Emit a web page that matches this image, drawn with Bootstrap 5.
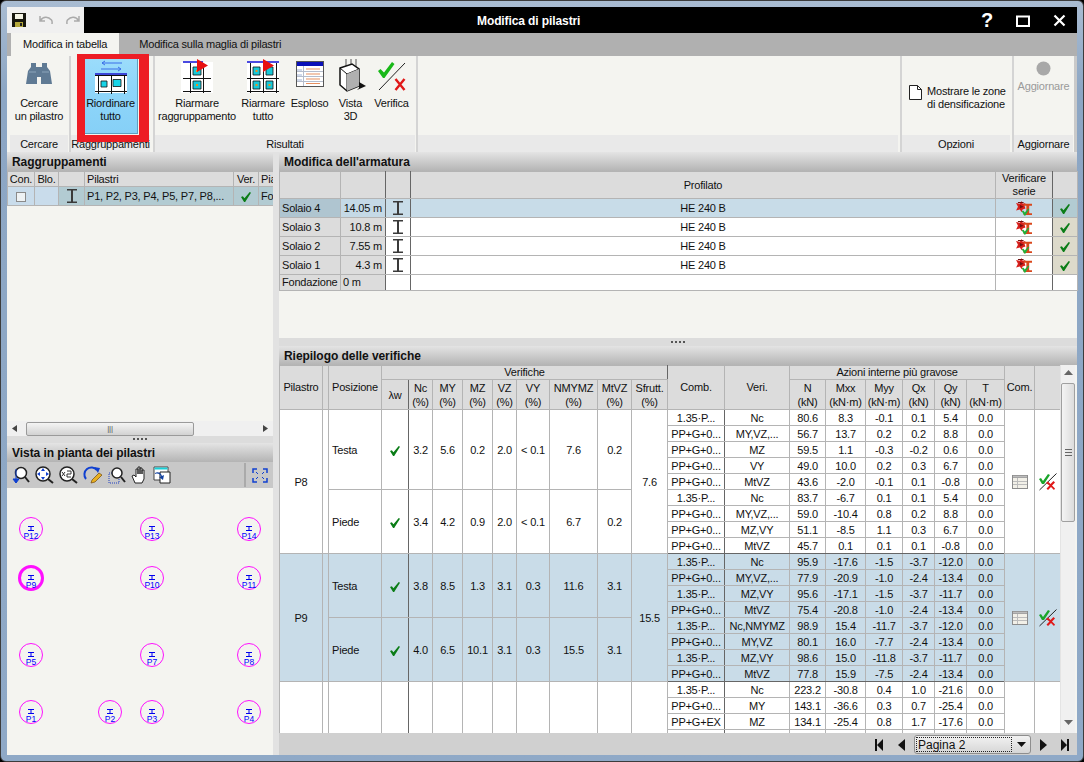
<!DOCTYPE html>
<html lang="it">
<head>
<meta charset="utf-8">
<title>Modifica di pilastri</title>
<link href="https://cdn.jsdelivr.net/npm/bootstrap@5.3.0/dist/css/bootstrap.min.css" rel="stylesheet">
<style>
html,body{margin:0;height:762px;width:1084px;overflow:hidden;background:#000}
body{font:11px/13px "Liberation Sans",Arial,sans-serif;letter-spacing:-.2px;color:#111}
.win{width:1084px;height:762px;padding:6px 6px 5px 6px;border:1px solid #3c3c3c;border-radius:6px;background:linear-gradient(#a9bcd2,#8ca6c4 12%,#8fa9c7)}
.clientw{width:1070px;height:748px}
.tbar{height:26px;background:#000;color:#fff}
.qat{width:77px;background:#f0f0f0}
.qg1{margin-left:12px}
.qg2{margin-left:13px}
.ttl{font-weight:700;font-size:12px;letter-spacing:-.1px;padding-left:393px;line-height:28px;white-space:nowrap}
.wctl{width:36px}
.tabsrow{height:23px;background:#b0b0b0;border:0;padding-left:4px}
.tabsrow .nav-link{border:0;border-radius:0;color:#111;background:transparent;padding:5px 12px 0;height:23px;font-size:11px;margin:0}
.tabsrow .nav-link.active{background:#f4f4f0;color:#111}
.tabsrow .nav-item+.nav-item{margin-left:8px}
.ribbon{height:96px;background:#f4f4f0;padding-right:4px;border-right:3px solid #c9c9c9}
.rgrp{display:flex;flex-direction:column;flex:none;border-left:2px solid #d4d4d4}
.rgrp1{margin-left:3px;width:58px;border-left:0}
.rgrp2{margin-left:1px;width:81px}
.rgrp3{margin-left:3px;width:262px}
.rgrp4{margin-left:1px;width:482px}
.rgrp5{margin-left:2px;width:110px}
.rgrp6{margin-left:2px;width:61px}
.rbody{height:79px;display:flex;justify-content:center}
.rlabel{height:17px;line-height:18px;text-align:center;background:#e9e9e9;white-space:nowrap;font-size:11px}
.rbtn{display:flex;flex-direction:column;align-items:center;text-align:center;flex:none;padding-top:3px}
.rbtn svg{flex:none;margin-bottom:3px}
.rbtn.hot{width:54px;height:76px;margin-top:2px;background:linear-gradient(#9bdcfb,#8fd6fa 38%,#86d0f7);border:1px solid #5b9fc0;padding-top:1px}
.rbtn.agg{padding-top:5px}
.rbtn.agg svg{margin-bottom:4px}
.rb80{width:84px}.rb48{width:48px}.rb45{width:45px}.rb37{width:37px}
.optbody{padding:4px 0 0 7px;align-items:center;justify-content:flex-start}
.optic{flex:none;margin:-10px 5px 0 0}
.redmark{position:absolute;left:76px;top:53px;width:72px;height:88px;border-style:solid;border-color:#ed1c24;border-width:5px 10px 7px 8px}
.paneL{width:266px;flex:none;background:#f4f4f0}
.vsplit{width:6px;flex:none;background:#e2e2e2}
.paneR{width:798px;flex:none;background:#f4f4f0}
.phead{height:19px;flex:none;line-height:20px;padding-left:5px;font-weight:700;font-size:12px;letter-spacing:-.05px;background:linear-gradient(#e4e4e4,#b4b4b4);color:#111;white-space:nowrap;overflow:hidden}
.hsplit{display:flex;flex:none;justify-content:center;align-items:center;background:#dcdcdc}
.dots{height:7px}.dots8{height:8px}
.vt{table-layout:fixed;margin:0;border-collapse:collapse;--bs-table-bg:transparent;--bs-table-color:#111;border-color:#b4b4b4;font-size:11px;flex:none}
.vt>:not(caption)>*>*{padding:0;border:1px solid #b4b4b4;text-align:center;vertical-align:middle;line-height:13px;background:transparent;box-shadow:none;white-space:nowrap;overflow:hidden;color:#111}
.vt>thead>tr>*{background:#dcdcdc;font-weight:400}
.tbg{width:266px}
.tbg col:nth-child(1){width:27px}.tbg col:nth-child(2){width:24px}.tbg col:nth-child(3){width:26px}.tbg col:nth-child(4){width:149px}.tbg col:nth-child(5){width:25px}.tbg col:nth-child(6){width:15px}
.tbg thead th{height:15px}
.tbg tbody td{height:19px;background:#b2cbd2}
.tbg tbody td.sel0{background:#c9dceb}
.tbg tbody td.lf,.tbg thead th.lf{text-align:left;padding-left:2px}
.ckbox{display:inline-block;width:10px;height:10px;border:1px solid #8a8a8a;background:#eef2f4;vertical-align:middle}
.tar{width:798px}
.tar col:nth-child(1){width:61px}.tar col:nth-child(2){width:45px}.tar col:nth-child(3){width:25px}.tar col:nth-child(4){width:585px}.tar col:nth-child(5){width:57px}.tar col:nth-child(6){width:25px}
.tar thead th{height:27px}
.tar tbody td{height:19px;background:#fff}
.tar tbody tr.lastr td{height:16px}
.tar tbody td.hc{background:#dcdcdc;text-align:left;padding-left:2px}
.tar tbody td.hv{background:#dcdcdc;text-align:right;padding-right:3px}
.tar tbody td.ck{background:#dddacb}
.tar tbody tr.on td{background:#c8dce8}
.tar tbody tr.on td.hc{background:#afc5d0}
.tar tbody tr.on td.hv{background:#c5d9e6}
.tar tbody tr.on td.ck{background:#b2cbd2}
.vt>*>*>.ld{border-left-color:#666;border-right-color:#666}
.vt>tbody>tr.tdk>*{border-bottom-color:#666}
.tsum{width:781px}
.tsum col:nth-child(1){width:43px}.tsum col:nth-child(2){width:6px}.tsum col:nth-child(3){width:53px}.tsum col:nth-child(4){width:27px}.tsum col:nth-child(5){width:24px}.tsum col:nth-child(6){width:30px}.tsum col:nth-child(7){width:30px}.tsum col:nth-child(8){width:24px}.tsum col:nth-child(9){width:33px}.tsum col:nth-child(10){width:48px}.tsum col:nth-child(11){width:34px}.tsum col:nth-child(12){width:36px}.tsum col:nth-child(13){width:57px}.tsum col:nth-child(14){width:65px}.tsum col:nth-child(15){width:36px}.tsum col:nth-child(16){width:40px}.tsum col:nth-child(17){width:37px}.tsum col:nth-child(18){width:32px}.tsum col:nth-child(19){width:32px}.tsum col:nth-child(20){width:38px}.tsum col:nth-child(21){width:30px}.tsum col:nth-child(22){width:26px}
.tsum thead tr:first-child>*{height:14px}
.vt.tsum>thead>tr:nth-child(2)>*{height:29px;line-height:14px;padding-top:1px}
.tsum tbody td{height:16px;background:#fff;line-height:14px}
.tsum tbody tr.b9 td{background:#c9dce8}
.tsum tbody td.lf{text-align:left;padding-left:3px}
.sumwrap{height:368px;flex:none;overflow:hidden}
.sumarea{width:781px;flex:none;background:#fff;height:368px;overflow:hidden}
.sbar{width:15px;flex:none;background:#f0f0f0;border-left:1px solid #e4e4e4;margin-right:2px}
.sarr{height:18px;text-align:center}
.sthumb{height:139px;border:1px solid #a0a0a0;border-radius:2px;background:linear-gradient(90deg,#f4f4f4,#dcdcdc)}
.pager{height:22px;flex:none;background:#d0d0d0;padding:1px 1px 0 0}
.pgsel{width:117px;height:19px;border:1px solid #8e8e8e;border-radius:3px;background:linear-gradient(#f2f2f2,#d6d6d6);padding:1px 0 1px 1px;margin:0 1px 0 2px}
.pgin{flex:1;border:1px dotted #222;font-size:12px;line-height:14px;padding-left:1px;letter-spacing:0}
.pgcar{width:18px}
.pgb{width:22px}
.hscroll{height:15px;flex:none;background:#f0f0f0;padding:0 5px}
.hthumb{width:168px;height:14px;margin-left:9px;border:1px solid #9a9a9a;border-radius:2px;background:linear-gradient(#f4f4f4,#d2d2d2);color:#555;font-size:8px;line-height:12px;text-align:center}
.ltool{height:26px;flex:none;background:#c8c8c8;padding-left:5px}
.ltool svg{margin-right:5px;flex:none}
.ltool .tsep{width:2px;height:24px;background:#aaa;margin-left:auto;margin-right:6px}
.canvasbox{height:267px;flex:none;background:#f4f4f0}
.pinlab{font:8.500px "Liberation Sans",Arial,sans-serif;fill:#0000ff;text-anchor:middle;letter-spacing:0}
.grey{color:#9a9a9a}
</style>
</head>
<body>
<svg class="d-none" xmlns="http://www.w3.org/2000/svg">
<symbol id="ck" viewBox="0 0 11 11"><path d="M0 5.500 2 4.600l1.800 2.200L9.600 0 11 .8 4.600 11H3.400z" fill="#0b7d17"/></symbol>
<symbol id="ib" viewBox="0 0 12 16"><path d="M1 1h10v1.600H7v10.800h4V15H1v-1.600h4V2.600H1z" fill="#3a3a3a"/></symbol>
<symbol id="ser" viewBox="0 0 18 16"><path d="M0 2l4 1 2-3 1 3 3-1-1 3 1 3-3 1-1 3-2-3-4 1 2-4z" fill="#d8201c"/><path d="M2 1h6v1H2zM4 4l4 2-4 2z" fill="#701010"/><path d="M8 3h9v2h-3v8h3v2H8v-2h3V5H8z" fill="#d9481c"/><path d="M6 11l2-.6 1.300 1.800L13 8l1 .8-4.200 7H9z" fill="#22b03a"/></symbol>
<symbol id="okx" viewBox="0 0 18 18"><path d="M.5 17L17.500.5" stroke="#222" fill="none"/><path d="M0 6l2-1 2 3 5-7 2 1-6 9H3z" fill="#1aa52a"/><path d="M7 10l2-1.500 2.500 2.500 3-3 1.500 1.500-3 3 3 3L15 17l-3-3-3 3-1.500-1.500 3-3z" fill="#e01818"/></symbol>
<symbol id="tb" viewBox="0 0 16 14"><path d="M0 0h16v14H0z" fill="#8c8c8c"/><path d="M1 3h14v10H1z" fill="#f2f0e8"/><path d="M1 .8h14V2.500H1zM5 3h1v10H5zM1 6h14v1H1zM1 9h14v1H1z" fill="#bcbcbc"/></symbol>
</svg>

<div class="win position-relative">
<div class="clientw d-flex flex-column">
  <div class="tbar d-flex align-items-stretch flex-shrink-0">
    <div class="qat d-flex align-items-center flex-shrink-0">
      <svg width="16" height="16" viewBox="0 0 16 16" class="ms-1"><path d="M1 1h14v14H1z" fill="#16160e"/><path d="M4 2h8v5H4z" fill="#f3f3e4"/><path d="M4 10h8v5H4z" fill="#b4a83a"/><path d="M9 11h2v3H9z" fill="#222"/></svg>
      <svg width="14" height="12" viewBox="0 0 14 12" class="qg1"><path d="M1 2v5h5M1.500 6.500C4 2.500 9 2 12.500 6c.8 1 .8 2 .5 4" fill="none" stroke="#aaa" stroke-width="1.500"/></svg>
      <svg width="14" height="12" viewBox="0 0 14 12" class="qg2"><path d="M13 2v5H8M12.500 6.500C10 2.500 5 2 1.500 6c-.8 1-.8 2-.5 4" fill="none" stroke="#aaa" stroke-width="1.500"/></svg>
    </div>
    <div class="ttl">Modifica di pilastri</div>
    <div class="ms-auto d-flex align-items-center text-center">
      <div class="wctl fw-bold fs-5">?</div>
      <div class="wctl"><svg width="14" height="12" viewBox="0 0 14 12"><path d="M1 1.500h12v9.500H1z" fill="none" stroke="#fff" stroke-width="2"/></svg></div>
      <div class="wctl"><svg width="13" height="13" viewBox="0 0 13 13"><path d="M1.500 1.500l10 10m0-10l-10 10" stroke="#fff" stroke-width="2.200"/></svg></div>
    </div>
  </div>
  <ul class="nav nav-tabs tabsrow flex-shrink-0">
    <li class="nav-item"><a class="nav-link active" href="#">Modifica in tabella</a></li>
    <li class="nav-item"><a class="nav-link" href="#">Modifica sulla maglia di pilastri</a></li>
  </ul>
  <div class="ribbon d-flex flex-shrink-0">
    <div class="rgrp rgrp1">
      <div class="rbody"><div class="rbtn">
        <svg width="26" height="35" viewBox="0 0 26 35"><path d="M5 4h5v4h6V4h5v4l3 4 2 13H15v-7h-4v7H0l2-13 3-4z" fill="#5f7a94"/><path d="M3 13h7M16 13h7" stroke="#8ca4ba"/></svg>
        <div>Cercare<br>un pilastro</div></div></div>
      <div class="rlabel">Cercare</div>
    </div>
    <div class="rgrp rgrp2">
      <div class="rbody"><div class="rbtn hot">
        <svg width="32" height="34" viewBox="0 0 32 34"><path d="M7 3h20M7 3l3-2M7 3l3 2M6 9h20M26 9l-3-2M26 9l-3 2" stroke="#3a6fe8" fill="none"/><path d="M0 13h32v20H0z" fill="#fff"/><path d="M0 13h32v2H0z" fill="#3a46d8"/><path d="M0 15h32v1H0zM0 31h32v1H0zM3 16h1v18H3zM16 16h1v18h-1zM29 16h1v18h-1z" fill="#111"/><path d="M6 21h6v6H6z" fill="#18d4e8" stroke="#111" stroke-width=".8"/><path d="M18 19.500h8v7h-8z" fill="#18d4e8" stroke="#111" stroke-width=".8"/></svg>
        <div>Riordinare<br>tutto</div></div></div>
      <div class="rlabel">Raggruppamenti</div>
    </div>
    <div class="rgrp rgrp3">
      <div class="rbody justify-content-start">
        <div class="rbtn rb80">
          <svg width="32" height="35" viewBox="0 0 32 35"><path d="M0 3h32v31H0z" fill="#fff"/><path d="M2 2h20v2H2z" fill="#4a4ae0"/><path d="M9 4h1v30H9zM22 4h1v30h-1zM2 19h28v1H2zM2 32h28v1H2z" fill="#111"/><path d="M12 8h8v8h-8zM12 22h8v8h-8z" fill="#18c8d8" stroke="#111" stroke-width=".8"/><path d="M15 11h2v2h-2zM15 25h2v2h-2z" fill="#e89020"/><path d="M16 0l11 6.500L16 13z" fill="#e81010"/></svg>
          <div>Riarmare<br>raggruppamento</div></div>
        <div class="rbtn rb48">
          <svg width="32" height="35" viewBox="0 0 32 35"><path d="M0 3h32v31H0z" fill="#fff"/><path d="M0 2h32v2H0z" fill="#4a4ae0"/><path d="M3 4h1v30H3zM16 4h1v30h-1zM29 4h1v30h-1zM0 19h32v1H0zM0 32h32v1H0z" fill="#111"/><path d="M6 8h7v8H6zM19 8h7v8h-7zM6 22h7v8H6zM19 22h7v8h-7z" fill="#18c8d8" stroke="#111" stroke-width=".8"/><path d="M8.500 11h2v2h-2zM8.500 25h2v2h-2zM21.500 25h2v2h-2z" fill="#e89020"/><path d="M16 0l11 6.500L16 13z" fill="#e81010"/></svg>
          <div>Riarmare<br>tutto</div></div>
        <div class="rbtn rb45">
          <svg width="28" height="35" viewBox="0 0 28 35"><path d="M0 2h28v26H0z" fill="#555"/><path d="M1 7h26v20H1z" fill="#fff"/><path d="M1 3h26v4H1z" fill="#0a10b8"/><path d="M1 10h5v2H1zM1 15h5v2H1zM1 20h5v2H1z" fill="#cfd8ea"/><path d="M7 7h1v20H7zM1 12h26v1H1zM1 17h26v1H1zM1 22h26v1H1z" fill="#b4bccc"/><path d="M10 9.500h14v1H10zM10 14.500h14v1H10zM10 19.500h14v1H10zM10 24h14v1H10z" fill="#e69060"/></svg>
          <div>Esploso</div></div>
        <div class="rbtn rb37">
          <svg width="30" height="35" viewBox="0 0 30 35"><path d="M10 0v8M15 0v6M20 0v8" stroke="#555"/><path d="M4 9l12-4 7 5v17l-12 5-7-6z" fill="#fff" stroke="#111" stroke-width="1.500"/><path d="M11 15v17M4 9l7 6 12-5" fill="none" stroke="#111"/><path d="M11 15l12-5v17l-12 5z" fill="#b0b0b0"/><path d="M23 23l7 4-9 4 2-2z" fill="#111"/></svg>
          <div>Vista<br>3D</div></div>
        <div class="rbtn rb45">
          <svg width="28" height="35" viewBox="0 0 28 35"><path d="M1 31L27 4" stroke="#222" fill="none"/><path d="M0 12l2.500-2 3.500 3.500L14 3l2.500 2L6.500 19H5z" fill="#18b818"/><path d="M17.500 20l9 11M26.500 20l-9 11" stroke="#e01818" stroke-width="2.400" fill="none"/></svg>
          <div>Verifica</div></div>
      </div>
      <div class="rlabel">Risultati</div>
    </div>
    <div class="rgrp rgrp4"><div class="rbody"></div><div class="rlabel"></div></div>
    <div class="rgrp rgrp5">
      <div class="rbody optbody">
        <svg width="13" height="15" viewBox="0 0 13 15" class="optic"><path d="M.5.500h8l4 4v10H.5z" fill="#fff" stroke="#222"/><path d="M8.500.500v4h4" fill="none" stroke="#222"/></svg>
        <div class="text-nowrap">Mostrare le zone<br>di densificazione</div>
      </div>
      <div class="rlabel">Opzioni</div>
    </div>
    <div class="rgrp rgrp6">
      <div class="rbody"><div class="rbtn agg grey"><svg width="15" height="15" viewBox="0 0 15 15"><circle cx="7.500" cy="7.500" r="7" fill="#a8a8a8"/></svg><div>Aggiornare</div></div></div>
      <div class="rlabel">Aggiornare</div>
    </div>
  </div>

  <div class="d-flex flex-grow-1" id="mainrow">
    <div class="paneL d-flex flex-column">
      <div class="phead">Raggruppamenti</div>
      <table class="table vt tbg">
        <colgroup><col><col><col><col><col><col></colgroup>
        <thead><tr><th>Con.</th><th>Blo.</th><th></th><th class="lf">Pilastri</th><th>Ver.</th><th class="lf">Pia</th></tr></thead>
        <tbody><tr><td class="sel0"><span class="ckbox"></span></td><td class="sel0"></td><td><svg width="12" height="16"><use href="#ib"/></svg></td><td class="lf">P1, P2, P3, P4, P5, P7, P8,...</td><td><svg width="10" height="10"><use href="#ck"/></svg></td><td class="lf">Fo</td></tr></tbody>
      </table>
      <div class="flex-grow-1"></div>
      <div class="hscroll d-flex align-items-center">
        <svg width="5" height="7" viewBox="0 0 5 7"><path d="M5 0v7L0 3.500z" fill="#444"/></svg>
        <div class="hthumb">|||</div>
        <svg width="5" height="7" viewBox="0 0 5 7" class="ms-auto"><path d="M0 0v7l5-3.500z" fill="#444"/></svg>
      </div>
      <div class="hsplit dots"><svg width="14" height="3"><path d="M0 0h2v2H0zM4 0h2v2H4zM8 0h2v2H8zM12 0h2v2h-2z" fill="#555"/></svg></div>
      <div class="phead">Vista in pianta dei pilastri</div>
      <div class="ltool d-flex align-items-center">
        <svg width="18" height="18" viewBox="0 0 18 18"><circle cx="9" cy="7" r="5.500" fill="#fff" stroke="#222" stroke-width="1.500"/><path d="M13 11l4 5" stroke="#222" stroke-width="2"/><path d="M4 3v14l-3-4h6l-3 4" fill="#1040d0" stroke="#1040d0"/></svg>
        <svg width="19" height="18" viewBox="0 0 19 18"><circle cx="8" cy="8" r="7" fill="#fff" stroke="#222" stroke-width="1.500"/><path d="M13 13l5 4" stroke="#222" stroke-width="2"/><path d="M8 2l2 3H6zM8 14l2-3H6zM2 8l3-2v4zM14 8l-3-2v4z" fill="#1040d0"/></svg>
        <svg width="19" height="18" viewBox="0 0 19 18"><circle cx="8" cy="8" r="7" fill="#fff" stroke="#222" stroke-width="1.500"/><path d="M13 13l5 4" stroke="#222" stroke-width="2"/><path d="M3 6l3 4m0-4l-3 4M8 5h4v3H8v3h4" fill="none" stroke="#333"/></svg>
        <svg width="20" height="18" viewBox="0 0 20 18"><path d="M3 13A7 7 0 1 1 14 4" fill="none" stroke="#1040d0" stroke-width="2"/><path d="M11 1l6 1-2 5z" fill="#1040d0"/><path d="M9 14l7-7 3 2-7 7-4 1z" fill="#e8b020" stroke="#704810" stroke-width=".7"/></svg>
        <svg width="18" height="18" viewBox="0 0 18 18"><path d="M1 7h10v10H1z" fill="none" stroke="#2040c0" stroke-dasharray="1 1"/><circle cx="9" cy="7" r="5" fill="#fff" stroke="#222" stroke-width="1.500"/><path d="M13 11l4 5" stroke="#222" stroke-width="2"/></svg>
        <svg width="17" height="18" viewBox="0 0 17 18"><path d="M4 17l-3-7 2-1 2 2V3h2v5V1h2v7V2h2v6V4h2v9l-2 4z" fill="#fff" stroke="#222"/></svg>
        <svg width="18" height="18" viewBox="0 0 18 18"><path d="M1 1h14v13H1z" fill="#fff" stroke="#444"/><path d="M1.500 1.500h13v2h-13z" fill="#18d0d8"/><path d="M7 6h10v11H7z" fill="#fff" stroke="#222"/><path d="M2 7c3-2 6 0 7 3l2-1-1 5-4-3 2-.5C7 8 5 7 2 8z" fill="#1040a0"/></svg>
        <div class="tsep"></div>
        <svg width="16" height="15" viewBox="0 0 16 15"><path d="M1 5V1h4M11 1h4v4M15 10v4h-4M5 14H1v-4" fill="none" stroke="#1040d0" stroke-width="1.500"/><path d="M4 4l2 2M12 4l-2 2M12 11l-2-2M4 11l2-2" stroke="#1040d0"/></svg>
      </div>
      <div class="canvasbox">
        <svg width="266" height="267" viewBox="0 0 266 267">
          <g fill="none" stroke="#ff10ff" stroke-width="1"><circle cx="24" cy="41" r="11.500"/><circle cx="145" cy="41" r="11.500"/><circle cx="242" cy="41" r="11.500"/><circle cx="24" cy="90" r="11.500" stroke-width="3"/><circle cx="145" cy="90" r="11.500"/><circle cx="242" cy="90" r="11.500"/><circle cx="24" cy="167" r="11.500"/><circle cx="145" cy="167" r="11.500"/><circle cx="242" cy="167" r="11.500"/><circle cx="24" cy="224" r="11.500"/><circle cx="103" cy="224" r="11.500"/><circle cx="145" cy="224" r="11.500"/><circle cx="242" cy="224" r="11.500"/></g>
          <g stroke="#0000ee" fill="none" transform="translate(0 2)"><path d="M21 36.500h6M24 36.500v3.500M21 40.500h6M142 36.500h6M145 36.500v3.500M142 40.500h6M239 36.500h6M242 36.500v3.500M239 40.500h6M21 85.500h6M24 85.500v3.500M21 89.500h6M142 85.500h6M145 85.500v3.500M142 89.500h6M239 85.500h6M242 85.500v3.500M239 89.500h6M21 162.500h6M24 162.500v3.500M21 166.500h6M142 162.500h6M145 162.500v3.500M142 166.500h6M239 162.500h6M242 162.500v3.500M239 166.500h6M21 219.500h6M24 219.500v3.500M21 223.500h6M100 219.500h6M103 219.500v3.500M100 223.500h6M142 219.500h6M145 219.500v3.500M142 223.500h6M239 219.500h6M242 219.500v3.500M239 223.500h6"/></g>
          <text class="pinlab" x="24" y="51">P12</text><text class="pinlab" x="145" y="51">P13</text><text class="pinlab" x="242" y="51">P14</text>
          <text class="pinlab" x="24" y="100">P9</text><text class="pinlab" x="145" y="100">P10</text><text class="pinlab" x="242" y="100">P11</text>
          <text class="pinlab" x="24" y="177">P5</text><text class="pinlab" x="145" y="177">P7</text><text class="pinlab" x="242" y="177">P8</text>
          <text class="pinlab" x="24" y="234">P1</text><text class="pinlab" x="103" y="234">P2</text><text class="pinlab" x="145" y="234">P3</text><text class="pinlab" x="242" y="234">P4</text>
        </svg>
      </div>
    </div>
    <div class="vsplit"></div>
    <div class="paneR d-flex flex-column">
      <div class="phead">Modifica dell'armatura</div>
      <table class="table vt tar">
        <colgroup><col><col><col><col><col><col></colgroup>
        <thead><tr><th></th><th class="ld"></th><th class="ld"></th><th>Profilato</th><th class="ld">Verificare<br>serie</th><th></th></tr></thead>
        <tbody>
          <tr class="on"><td class="hc">Solaio 4</td><td class="hv ld">14.05 m</td><td class="ld"><svg width="12" height="16"><use href="#ib"/></svg></td><td>HE 240 B</td><td class="ld"><svg width="17" height="15"><use href="#ser"/></svg></td><td class="ck"><svg width="10" height="10"><use href="#ck"/></svg></td></tr>
          <tr><td class="hc">Solaio 3</td><td class="hv ld">10.8 m</td><td class="ld"><svg width="12" height="16"><use href="#ib"/></svg></td><td>HE 240 B</td><td class="ld"><svg width="17" height="15"><use href="#ser"/></svg></td><td class="ck"><svg width="10" height="10"><use href="#ck"/></svg></td></tr>
          <tr><td class="hc">Solaio 2</td><td class="hv ld">7.55 m</td><td class="ld"><svg width="12" height="16"><use href="#ib"/></svg></td><td>HE 240 B</td><td class="ld"><svg width="17" height="15"><use href="#ser"/></svg></td><td class="ck"><svg width="10" height="10"><use href="#ck"/></svg></td></tr>
          <tr><td class="hc">Solaio 1</td><td class="hv ld">4.3 m</td><td class="ld"><svg width="12" height="16"><use href="#ib"/></svg></td><td>HE 240 B</td><td class="ld"><svg width="17" height="15"><use href="#ser"/></svg></td><td class="ck"><svg width="10" height="10"><use href="#ck"/></svg></td></tr>
          <tr class="lastr"><td class="hc">Fondazione</td><td class="hc ld">0 m</td><td class="ld"></td><td></td><td class="ld"></td><td></td></tr>
        </tbody>
      </table>
      <div class="flex-grow-1"></div>
      <div class="hsplit dots8"><svg width="14" height="3"><path d="M0 0h2v2H0zM4 0h2v2H4zM8 0h2v2H8zM12 0h2v2h-2z" fill="#555"/></svg></div>
      <div class="phead">Riepilogo delle verifiche</div>
      <div class="d-flex sumwrap">
        <div class="sumarea">
        <table class="table vt tsum">
          <colgroup><col><col><col><col><col><col><col><col><col><col><col><col><col><col><col><col><col><col><col><col><col><col></colgroup>
          <thead>
            <tr><th rowspan="2">Pilastro</th><th rowspan="2"></th><th rowspan="2">Posizione</th><th colspan="9" class="ld">Verifiche</th><th rowspan="2">Comb.</th><th rowspan="2">Veri.</th><th colspan="6">Azioni interne più gravose</th><th rowspan="2">Com.</th><th rowspan="2" class="ld"></th></tr>
            <tr><th class="ld">λw</th><th>Nc<br>(%)</th><th>MY<br>(%)</th><th>MZ<br>(%)</th><th>VZ<br>(%)</th><th>VY<br>(%)</th><th>NMYMZ<br>(%)</th><th>MtVZ<br>(%)</th><th>Sfrutt.<br>(%)</th><th>N<br>(kN)</th><th>Mxx<br>(kN·m)</th><th>Myy<br>(kN·m)</th><th>Qx<br>(kN)</th><th>Qy<br>(kN)</th><th>T<br>(kN·m)</th></tr>
          </thead>
          <tbody>
            <tr><td rowspan="9">P8</td><td rowspan="9"></td><td rowspan="5" class="lf">Testa</td><td rowspan="5" class="ld"><svg width="10" height="10"><use href="#ck"/></svg></td><td rowspan="5">3.2</td><td rowspan="5">5.6</td><td rowspan="5">0.2</td><td rowspan="5">2.0</td><td rowspan="5">&lt; 0.1</td><td rowspan="5">7.6</td><td rowspan="5">0.2</td><td rowspan="9">7.6</td><td class="ld">1.35·P...</td><td>Nc</td><td>80.6</td><td>8.3</td><td>-0.1</td><td>0.1</td><td>5.4</td><td>0.0</td><td rowspan="9"><svg width="16" height="14"><use href="#tb"/></svg></td><td rowspan="9" class="ld"><svg width="18" height="18"><use href="#okx"/></svg></td></tr>
            <tr><td class="ld">PP+G+0...</td><td>MY,VZ,...</td><td>56.7</td><td>13.7</td><td>0.2</td><td>0.2</td><td>8.8</td><td>0.0</td></tr>
            <tr><td class="ld">PP+G+0...</td><td>MZ</td><td>59.5</td><td>1.1</td><td>-0.3</td><td>-0.2</td><td>0.6</td><td>0.0</td></tr>
            <tr><td class="ld">PP+G+0...</td><td>VY</td><td>49.0</td><td>10.0</td><td>0.2</td><td>0.3</td><td>6.7</td><td>0.0</td></tr>
            <tr><td class="ld">PP+G+0...</td><td>MtVZ</td><td>43.6</td><td>-2.0</td><td>-0.1</td><td>0.1</td><td>-0.8</td><td>0.0</td></tr>
            <tr><td rowspan="4" class="lf">Piede</td><td rowspan="4" class="ld"><svg width="10" height="10"><use href="#ck"/></svg></td><td rowspan="4">3.4</td><td rowspan="4">4.2</td><td rowspan="4">0.9</td><td rowspan="4">2.0</td><td rowspan="4">&lt; 0.1</td><td rowspan="4">6.7</td><td rowspan="4">0.2</td><td class="ld">1.35·P...</td><td>Nc</td><td>83.7</td><td>-6.7</td><td>0.1</td><td>0.1</td><td>5.4</td><td>0.0</td></tr>
            <tr><td class="ld">PP+G+0...</td><td>MY,VZ,...</td><td>59.0</td><td>-10.4</td><td>0.8</td><td>0.2</td><td>8.8</td><td>0.0</td></tr>
            <tr><td class="ld">PP+G+0...</td><td>MZ,VY</td><td>51.1</td><td>-8.5</td><td>1.1</td><td>0.3</td><td>6.7</td><td>0.0</td></tr>
            <tr class="tdk"><td class="ld">PP+G+0...</td><td>MtVZ</td><td>45.7</td><td>0.1</td><td>0.1</td><td>0.1</td><td>-0.8</td><td>0.0</td></tr>
            <tr class="b9"><td rowspan="8">P9</td><td rowspan="8"></td><td rowspan="4" class="lf">Testa</td><td rowspan="4" class="ld"><svg width="10" height="10"><use href="#ck"/></svg></td><td rowspan="4">3.8</td><td rowspan="4">8.5</td><td rowspan="4">1.3</td><td rowspan="4">3.1</td><td rowspan="4">0.3</td><td rowspan="4">11.6</td><td rowspan="4">3.1</td><td rowspan="8">15.5</td><td class="ld">1.35·P...</td><td>Nc</td><td>95.9</td><td>-17.6</td><td>-1.5</td><td>-3.7</td><td>-12.0</td><td>0.0</td><td rowspan="8"><svg width="16" height="14"><use href="#tb"/></svg></td><td rowspan="8" class="ld"><svg width="18" height="18"><use href="#okx"/></svg></td></tr>
            <tr class="b9"><td class="ld">PP+G+0...</td><td>MY,VZ,...</td><td>77.9</td><td>-20.9</td><td>-1.0</td><td>-2.4</td><td>-13.4</td><td>0.0</td></tr>
            <tr class="b9"><td class="ld">1.35·P...</td><td>MZ,VY</td><td>95.6</td><td>-17.1</td><td>-1.5</td><td>-3.7</td><td>-11.7</td><td>0.0</td></tr>
            <tr class="b9"><td class="ld">PP+G+0...</td><td>MtVZ</td><td>75.4</td><td>-20.8</td><td>-1.0</td><td>-2.4</td><td>-13.4</td><td>0.0</td></tr>
            <tr class="b9"><td rowspan="4" class="lf">Piede</td><td rowspan="4" class="ld"><svg width="10" height="10"><use href="#ck"/></svg></td><td rowspan="4">4.0</td><td rowspan="4">6.5</td><td rowspan="4">10.1</td><td rowspan="4">3.1</td><td rowspan="4">0.3</td><td rowspan="4">15.5</td><td rowspan="4">3.1</td><td class="ld">1.35·P...</td><td>Nc,NMYMZ</td><td>98.9</td><td>15.4</td><td>-11.7</td><td>-3.7</td><td>-12.0</td><td>0.0</td></tr>
            <tr class="b9"><td class="ld">PP+G+0...</td><td>MY,VZ</td><td>80.1</td><td>16.0</td><td>-7.7</td><td>-2.4</td><td>-13.4</td><td>0.0</td></tr>
            <tr class="b9"><td class="ld">1.35·P...</td><td>MZ,VY</td><td>98.6</td><td>15.0</td><td>-11.8</td><td>-3.7</td><td>-11.7</td><td>0.0</td></tr>
            <tr class="b9 tdk"><td class="ld">PP+G+0...</td><td>MtVZ</td><td>77.8</td><td>15.9</td><td>-7.5</td><td>-2.4</td><td>-13.4</td><td>0.0</td></tr>
            <tr><td rowspan="4"></td><td rowspan="4"></td><td rowspan="4"></td><td rowspan="4" class="ld"></td><td rowspan="4"></td><td rowspan="4"></td><td rowspan="4"></td><td rowspan="4"></td><td rowspan="4"></td><td rowspan="4"></td><td rowspan="4"></td><td rowspan="4"></td><td class="ld">1.35·P...</td><td>Nc</td><td>223.2</td><td>-30.8</td><td>0.4</td><td>1.0</td><td>-21.6</td><td>0.0</td><td rowspan="4"></td><td rowspan="4" class="ld"></td></tr>
            <tr><td class="ld">PP+G+0...</td><td>MY</td><td>143.1</td><td>-36.6</td><td>0.3</td><td>0.7</td><td>-25.4</td><td>0.0</td></tr>
            <tr><td class="ld">PP+G+EX</td><td>MZ</td><td>134.1</td><td>-25.4</td><td>0.8</td><td>1.7</td><td>-17.6</td><td>0.0</td></tr>
            <tr><td class="ld"></td><td></td><td></td><td></td><td></td><td></td><td></td><td></td></tr>
          </tbody>
        </table>
        </div>
        <div class="sbar d-flex flex-column">
          <div class="sarr"><svg width="9" height="5" viewBox="0 0 9 5"><path d="M4.500 0L9 5H0z" fill="#666"/></svg></div>
          <div class="sthumb d-flex align-items-center justify-content-center"><svg width="7" height="7" viewBox="0 0 7 7"><path d="M0 .5h7M0 3.500h7M0 6.500h7" stroke="#666"/></svg></div>
          <div class="mt-auto sarr"><svg width="9" height="5" viewBox="0 0 9 5"><path d="M4.500 5L9 0H0z" fill="#666"/></svg></div>
        </div>
      </div>
      <div class="pager d-flex align-items-center justify-content-end">
        <div class="pgb text-center"><svg width="8" height="12" viewBox="0 0 8 12"><path d="M0 0h2v12H0zM8 0v12L2 6z" fill="#111"/></svg></div>
        <div class="pgb text-center"><svg width="7" height="12" viewBox="0 0 7 12"><path d="M7 0v12L0 6z" fill="#111"/></svg></div>
        <div class="pgsel d-flex"><div class="pgin">Pagina 2</div><div class="pgcar text-center"><svg width="9" height="5" viewBox="0 0 9 5"><path d="M0 0h9L4.500 5z" fill="#111"/></svg></div></div>
        <div class="pgb text-center"><svg width="7" height="12" viewBox="0 0 7 12"><path d="M0 0v12l7-6z" fill="#111"/></svg></div>
        <div class="pgb text-center"><svg width="8" height="12" viewBox="0 0 8 12"><path d="M0 0v12l6-6zM6 0h2v12H6z" fill="#111"/></svg></div>
      </div>
    </div>
  </div>
</div>
<div class="redmark"></div>
</div>
<script src="https://cdn.jsdelivr.net/npm/bootstrap@5.3.0/dist/js/bootstrap.bundle.min.js"></script>
</body>
</html>
